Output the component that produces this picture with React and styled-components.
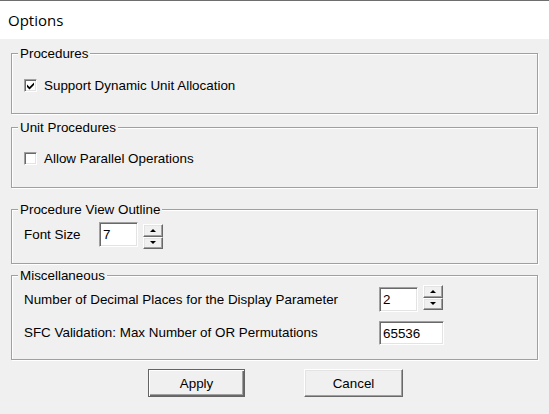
import React, { useState } from 'react'
import styled, { createGlobalStyle } from 'styled-components'

const GlobalStyle = createGlobalStyle`
  html, body {
    margin: 0;
    padding: 0;
    background: #f0f0f0;
  }
  body {
    font-family: 'Liberation Sans', Arial, sans-serif;
    font-size: 13.4px;
    color: #000;
  }
`

const Window = styled.div`
  width: 549px;
  height: 414px;
  background: #f0f0f0;
  display: flex;
  flex-direction: column;
`

const TitleBar = styled.div`
  height: 37px;
  border-top: 1px solid #6e6e6e;
  background: #fff;
  display: flex;
  align-items: center;
  padding-left: 8px;
  font-family: 'Open Sans', 'Noto Sans', sans-serif;
  font-size: 15px;
  padding-bottom: 1px;
`

const Body = styled.div`
  padding: 14px 11px 0 11px;
  display: flex;
  flex-direction: column;
`

const Group = styled.div`
  position: relative;
  box-sizing: border-box;
  height: ${(p) => p.$h}px;
  margin-top: ${(p) => p.$mt || 0}px;
  width: 527px;
  border: 1px solid #a0a0a0;
  box-shadow: 1px 1px 0 #fff, inset 1px 1px 0 #fff;
  padding: ${(p) => p.$pt}px 0 0 11px;
  display: flex;
  flex-direction: column;
  gap: ${(p) => p.$gap || 0}px;
`

const Legend = styled.span`
  position: absolute;
  top: -8px;
  left: 6px;
  padding: 0 2px;
  line-height: 15px;
  background: #f0f0f0;
`

const CheckRow = styled.label`
  display: flex;
  align-items: center;
  height: 15px;
  gap: 7px;
  padding-left: 1px;
  cursor: default;
`

const Box = styled.span`
  box-sizing: border-box;
  width: 13px;
  height: 13px;
  background: #fff;
  border: 1px solid;
  border-color: #a0a0a0 #fff #fff #a0a0a0;
  box-shadow: inset 1px 1px 0 #696969, inset -1px -1px 0 #e3e3e3;
  display: flex;
  align-items: center;
  justify-content: center;
`

const FieldRow = styled.div`
  display: flex;
  align-items: flex-start;
  height: ${(p) => p.$h || 25}px;
`

const Label = styled.span`
  width: ${(p) => p.$w}px;
  padding-left: 1px;
  box-sizing: border-box;
  line-height: ${(p) => p.$lh || 25}px;
  white-space: nowrap;
`

const Field = styled.input`
  box-sizing: border-box;
  width: ${(p) => p.$w}px;
  height: ${(p) => p.$h || 25}px;
  margin: 0;
  padding: 0 0 0 3px;
  background: #fff;
  border: 1px solid;
  border-color: #a0a0a0 #fff #fff #a0a0a0;
  box-shadow: inset 1px 1px 0 #696969, inset -1px -1px 0 #e3e3e3;
  font-family: 'Liberation Sans', Arial, sans-serif;
  font-size: 13.4px;
  color: #000;
  outline: none;
`

const Spinner = styled.div`
  display: flex;
  flex-direction: column;
  margin-left: 5px;
  margin-top: ${(p) => p.$mt}px;
`

const SpinBtn = styled.button`
  box-sizing: border-box;
  width: 20px;
  height: 12.5px;
  padding: 0;
  margin: 0;
  background: #f0f0f0;
  border: 1px solid;
  border-color: #fff #696969 #696969 #fff;
  box-shadow: inset -1px -1px 0 #a0a0a0, inset 1px 1px 0 #e3e3e3;
  display: flex;
  align-items: center;
  justify-content: center;
`

const Arrow = styled.span`
  width: 0;
  height: 0;
  border-left: 3.5px solid transparent;
  border-right: 3.5px solid transparent;
  ${(p) => (p.$up ? 'border-bottom: 3.5px solid #000;' : 'border-top: 3.5px solid #000;')}
`

const Buttons = styled.div`
  display: flex;
  justify-content: center;
  gap: 59px;
  margin-top: 9px;
  padding-left: 2px;
`

const Button = styled.button`
  box-sizing: border-box;
  width: ${(p) => p.$w}px;
  height: 28px;
  margin: 0;
  padding: 0;
  font-family: 'Liberation Sans', Arial, sans-serif;
  font-size: 13.4px;
  color: #000;
  background: #f0f0f0;
  border: 1px solid;
  border-color: ${(p) => (p.$default ? '#646464' : '#fff #696969 #696969 #fff')};
  box-shadow: ${(p) =>
    p.$default
      ? 'inset 1px 1px 0 #fff, inset -1px -1px 0 #696969, inset -2px -2px 0 #a0a0a0'
      : 'inset -1px -1px 0 #a0a0a0, inset 1px 1px 0 #e3e3e3'};
`

function Check({ checked, onToggle, children }) {
  return (
    <CheckRow onClick={onToggle}>
      <Box>
        {checked && (
          <svg width="9" height="9" viewBox="0 0 9 9">
            <path d="M1 3.5 L3.5 6 L8 1.5 L8 4 L3.5 8.5 L1 6 Z" fill="#000" />
          </svg>
        )}
      </Box>
      {children}
    </CheckRow>
  )
}

function Spin({ mt }) {
  return (
    <Spinner $mt={mt}>
      <SpinBtn>
        <Arrow $up />
      </SpinBtn>
      <SpinBtn>
        <Arrow />
      </SpinBtn>
    </Spinner>
  )
}

export default function App() {
  const [dynamic, setDynamic] = useState(true)
  const [parallel, setParallel] = useState(false)

  return (
    <Window>
      <GlobalStyle />
      <TitleBar>Options</TitleBar>
      <Body>
        <Group $h={61} $pt={24}>
          <Legend>Procedures</Legend>
          <Check checked={dynamic} onToggle={() => setDynamic(!dynamic)}>
            Support Dynamic Unit Allocation
          </Check>
        </Group>
        <Group $h={61} $mt={13} $pt={23}>
          <Legend>Unit Procedures</Legend>
          <Check checked={parallel} onToggle={() => setParallel(!parallel)}>
            Allow Parallel Operations
          </Check>
        </Group>
        <Group $h={55} $mt={21} $pt={12}>
          <Legend>Procedure View Outline</Legend>
          <FieldRow>
            <Label $w={76}>Font Size</Label>
            <Field $w={39} defaultValue="7" />
            <Spin mt={2} />
          </FieldRow>
        </Group>
        <Group $h={85} $mt={11} $pt={11} $gap={9}>
          <Legend>Miscellaneous</Legend>
          <FieldRow>
            <Label $w={356}>Number of Decimal Places for the Display Parameter</Label>
            <Field $w={39} defaultValue="2" />
            <Spin mt={-2} />
          </FieldRow>
          <FieldRow $h={24}>
            <Label $w={356} $lh={24}>SFC Validation: Max Number of OR Permutations</Label>
            <Field $w={65} $h={24} defaultValue="65536" />
          </FieldRow>
        </Group>
        <Buttons>
          <Button $w={97} $default>Apply</Button>
          <Button $w={99}>Cancel</Button>
        </Buttons>
      </Body>
    </Window>
  )
}
